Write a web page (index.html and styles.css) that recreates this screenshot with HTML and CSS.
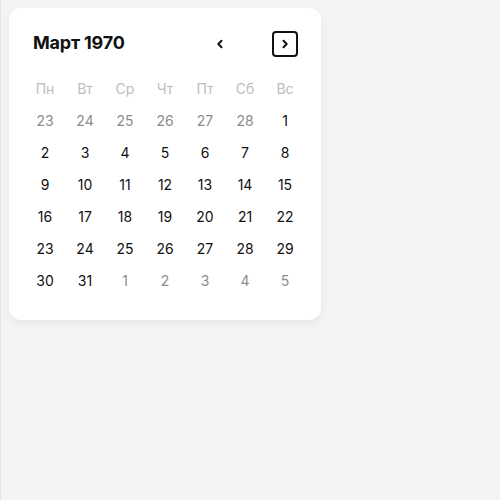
FILE: index.html
```html
<!DOCTYPE html>
<html lang="ru">
<head>
<meta charset="utf-8">
<link rel="stylesheet" href="styles.css">
</head>
<body>
<div class="page">
  <div class="card">
    <div class="header">
      <div class="title">Март 1970</div>
      <div class="nav">
        <button class="nav-btn">
          <svg width="10" height="10" viewBox="0 0 10 10"><path d="M6.5 1.8 L3.3 5 L6.5 8.2" fill="none" stroke="#111" stroke-width="2" stroke-linecap="round" stroke-linejoin="round"/></svg>
        </button>
        <button class="nav-btn active">
          <svg width="10" height="10" viewBox="0 0 10 10"><path d="M3.5 1.8 L6.7 5 L3.5 8.2" fill="none" stroke="#111" stroke-width="2" stroke-linecap="round" stroke-linejoin="round"/></svg>
        </button>
      </div>
    </div>
    <div class="grid">
      <div class="wd">Пн</div><div class="wd">Вт</div><div class="wd">Ср</div><div class="wd">Чт</div><div class="wd">Пт</div><div class="wd">Сб</div><div class="wd">Вс</div>
      <div class="d out">23</div><div class="d out">24</div><div class="d out">25</div><div class="d out">26</div><div class="d out">27</div><div class="d out">28</div><div class="d">1</div>
      <div class="d">2</div><div class="d">3</div><div class="d">4</div><div class="d">5</div><div class="d">6</div><div class="d">7</div><div class="d">8</div>
      <div class="d">9</div><div class="d">10</div><div class="d">11</div><div class="d">12</div><div class="d">13</div><div class="d">14</div><div class="d">15</div>
      <div class="d">16</div><div class="d">17</div><div class="d">18</div><div class="d">19</div><div class="d">20</div><div class="d">21</div><div class="d">22</div>
      <div class="d">23</div><div class="d">24</div><div class="d">25</div><div class="d">26</div><div class="d">27</div><div class="d">28</div><div class="d">29</div>
      <div class="d">30</div><div class="d">31</div><div class="d out">1</div><div class="d out">2</div><div class="d out">3</div><div class="d out">4</div><div class="d out">5</div>
    </div>
  </div>
</div>
</body>
</html>
```
FILE: styles.css
```css
html, body {
  margin: 0;
  padding: 0;
  height: 100%;
}
body {
  background: #f4f4f4;
  font-family: Inter, "Noto Sans", sans-serif;
  color: #111;
}
.page {
  min-height: 100%;
  box-sizing: border-box;
  border-left: 1px solid #e4e4e4;
  padding: 8px;
}
.card {
  width: 312px;
  box-sizing: border-box;
  background: #fff;
  border-radius: 12px;
  box-shadow: 0 4px 10px rgba(0, 0, 0, 0.06);
  padding: 16px 16px 24px 16px;
}
.header {
  height: 40px;
  margin-bottom: 8px;
  display: flex;
  align-items: center;
  justify-content: space-between;
  padding: 0 7px 0 8px;
}
.title {
  font-size: 18px;
  font-weight: 700;
  letter-spacing: -0.2px;
  margin-top: -4px;
}
.nav {
  display: flex;
  gap: 39px;
  align-items: center;
}
.nav-btn {
  width: 26px;
  height: 26px;
  box-sizing: border-box;
  border: 2px solid transparent;
  border-radius: 4px;
  background: none;
  padding: 0;
  display: flex;
  align-items: center;
  justify-content: center;
}
.nav-btn.active {
  border-color: #111;
}
.grid {
  display: grid;
  grid-template-columns: repeat(7, 40px);
  grid-auto-rows: 32px;
}
.wd, .d {
  display: flex;
  align-items: center;
  justify-content: center;
  font-size: 14px;
}
.wd {
  color: #bdbdbd;
}
.d {
  color: #111;
}
.d.out {
  color: #8c8c8c;
}
```
